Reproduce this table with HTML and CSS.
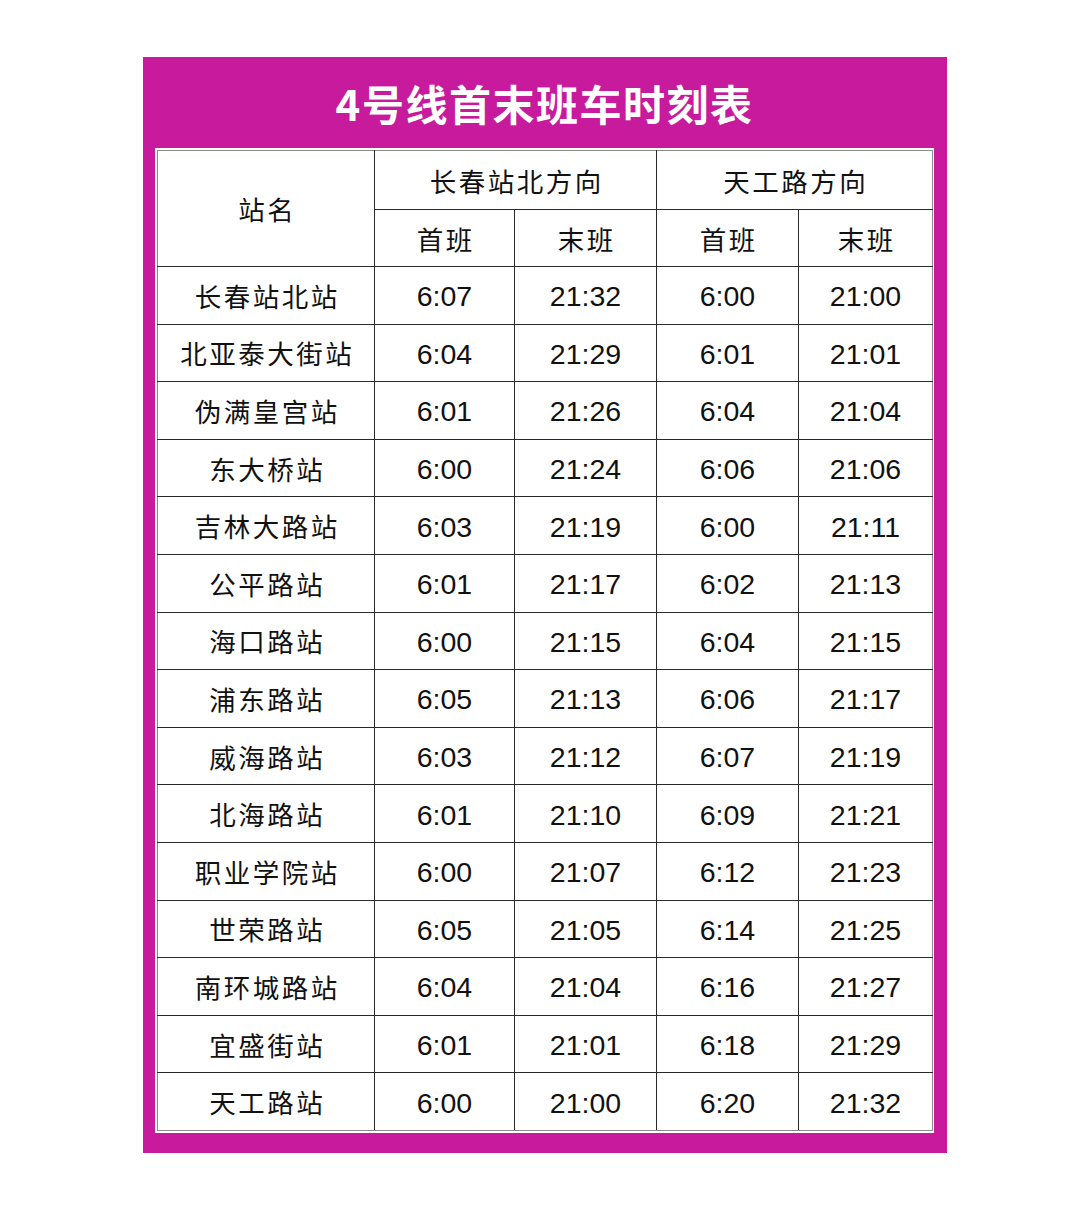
FILE: index.html
```html
<!DOCTYPE html>
<html lang="zh-CN">
<head>
<meta charset="utf-8">
<link rel="stylesheet" href="styles.css">
</head>
<body>
<div class="panel">
  <div class="title">4号线首末班车时刻表</div>
  <div class="frame">
    <table class="tt">
      <colgroup>
        <col class="c-name"><col class="c1"><col class="c2"><col class="c3"><col class="c4">
      </colgroup>
      <thead>
        <tr class="h1">
          <th rowspan="2" class="cjk">站名</th>
          <th colspan="2" class="cjk">长春站北方向</th>
          <th colspan="2" class="cjk">天工路方向</th>
        </tr>
        <tr class="h2">
          <th class="cjk">首班</th><th class="cjk">末班</th><th class="cjk">首班</th><th class="cjk">末班</th>
        </tr>
      </thead>
      <tbody>
        <tr><td class="cjk">长春站北站</td><td>6:07</td><td>21:32</td><td>6:00</td><td>21:00</td></tr>
        <tr><td class="cjk">北亚泰大街站</td><td>6:04</td><td>21:29</td><td>6:01</td><td>21:01</td></tr>
        <tr><td class="cjk">伪满皇宫站</td><td>6:01</td><td>21:26</td><td>6:04</td><td>21:04</td></tr>
        <tr><td class="cjk">东大桥站</td><td>6:00</td><td>21:24</td><td>6:06</td><td>21:06</td></tr>
        <tr><td class="cjk">吉林大路站</td><td>6:03</td><td>21:19</td><td>6:00</td><td>21:11</td></tr>
        <tr><td class="cjk">公平路站</td><td>6:01</td><td>21:17</td><td>6:02</td><td>21:13</td></tr>
        <tr><td class="cjk">海口路站</td><td>6:00</td><td>21:15</td><td>6:04</td><td>21:15</td></tr>
        <tr><td class="cjk">浦东路站</td><td>6:05</td><td>21:13</td><td>6:06</td><td>21:17</td></tr>
        <tr><td class="cjk">威海路站</td><td>6:03</td><td>21:12</td><td>6:07</td><td>21:19</td></tr>
        <tr><td class="cjk">北海路站</td><td>6:01</td><td>21:10</td><td>6:09</td><td>21:21</td></tr>
        <tr><td class="cjk">职业学院站</td><td>6:00</td><td>21:07</td><td>6:12</td><td>21:23</td></tr>
        <tr><td class="cjk">世荣路站</td><td>6:05</td><td>21:05</td><td>6:14</td><td>21:25</td></tr>
        <tr><td class="cjk">南环城路站</td><td>6:04</td><td>21:04</td><td>6:16</td><td>21:27</td></tr>
        <tr><td class="cjk">宜盛街站</td><td>6:01</td><td>21:01</td><td>6:18</td><td>21:29</td></tr>
        <tr><td class="cjk">天工路站</td><td>6:00</td><td>21:00</td><td>6:20</td><td>21:32</td></tr>
      </tbody>
    </table>
  </div>
</div>
</body>
</html>
```

FILE: styles.css
```css
html, body {
  margin: 0;
  padding: 0;
  background: #ffffff;
}
body {
  width: 1080px;
  height: 1215px;
  font-family: "Liberation Sans", "Noto Sans CJK SC", sans-serif;
}
.panel {
  margin: 57px 0 0 143px;
  width: 804px;
  height: 1096px;
  background: #c81a9c;
  box-sizing: border-box;
  padding: 0 13px 20px 12px;
  display: flex;
  flex-direction: column;
}
.title {
  height: 91px;
  display: flex;
  align-items: center;
  justify-content: center;
  color: #ffffff;
  font-family: "Noto Sans CJK SC", sans-serif;
  font-weight: 700;
  font-size: 42px;
  letter-spacing: 1.5px;
  padding-top: 0;
  box-sizing: border-box;
}
.frame {
  flex: 1;
  background: #ffffff;
  padding: 2px;
  box-sizing: border-box;
}
.tt {
  width: 100%;
  height: 100%;
  border-collapse: collapse;
  table-layout: fixed;
  border: 1px solid #8a8a8a;
  color: #111111;
}
.c-name { width: 217px; }
.c1 { width: 140px; }
.c2 { width: 142px; }
.c3 { width: 142px; }
.c4 { width: 134px; }
.tt th, .tt td {
  border: 1px solid #2a2a2a;
  text-align: center;
  vertical-align: middle;
  padding: 3px 0 0;
  font-weight: 400;
  font-size: 28.5px;
}
.tt tr > :first-child { border-left-color: #8a8a8a; }
.tt tr > :last-child { border-right-color: #8a8a8a; }
.tt thead tr:first-child > * { border-top-color: #8a8a8a; }
.tt tbody tr:last-child > * { border-bottom-color: #8a8a8a; }
.tt .cjk {
  font-family: "Noto Sans CJK SC", sans-serif;
  font-size: 26.5px;
  letter-spacing: 2.5px;
  text-indent: 2.5px;
  padding: 0;
}
.h1 { height: 59px; }
.h2 { height: 57px; }
.tt tbody tr { height: 57.6px; }
```
